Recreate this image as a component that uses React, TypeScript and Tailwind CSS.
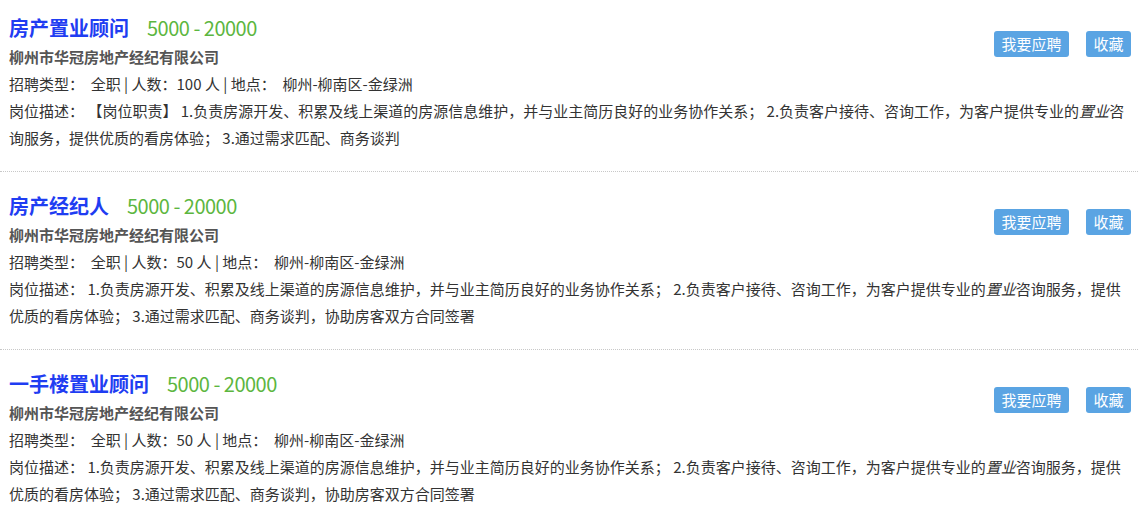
import React from "react";

type Job = {
  title: string;
  salary: string;
  company: string;
  type: string;
  count: number;
  place: string;
  prefix?: string;
  before: string;
  after: string;
};

const jobs: Job[] = [
  {
    title: "房产置业顾问",
    salary: "5000 - 20000",
    company: "柳州市华冠房地产经纪有限公司",
    type: "全职",
    count: 100,
    place: "柳州-柳南区-金绿洲",
    prefix: "【岗位职责】 ",
    before:
      "1.负责房源开发、积累及线上渠道的房源信息维护，并与业主简历良好的业务协作关系； 2.负责客户接待、咨询工作，为客户提供专业的",
    after: "咨询服务，提供优质的看房体验； 3.通过需求匹配、商务谈判",
  },
  {
    title: "房产经纪人",
    salary: "5000 - 20000",
    company: "柳州市华冠房地产经纪有限公司",
    type: "全职",
    count: 50,
    place: "柳州-柳南区-金绿洲",
    before:
      "1.负责房源开发、积累及线上渠道的房源信息维护，并与业主简历良好的业务协作关系； 2.负责客户接待、咨询工作，为客户提供专业的",
    after: "咨询服务，提供优质的看房体验； 3.通过需求匹配、商务谈判，协助房客双方合同签署",
  },
  {
    title: "一手楼置业顾问",
    salary: "5000 - 20000",
    company: "柳州市华冠房地产经纪有限公司",
    type: "全职",
    count: 50,
    place: "柳州-柳南区-金绿洲",
    before:
      "1.负责房源开发、积累及线上渠道的房源信息维护，并与业主简历良好的业务协作关系； 2.负责客户接待、咨询工作，为客户提供专业的",
    after: "咨询服务，提供优质的看房体验； 3.通过需求匹配、商务谈判，协助房客双方合同签署",
  },
];

const JobItem = ({ job }: { job: Job }) => {
  return (
    <div className="pl-[9px] pr-[7px] pt-[19px] first:pt-[13px] pb-[20px] border-b border-dotted border-[#c8c8c8]">
      <div className="flex items-start justify-between">
        <div>
          <div className="flex items-center h-[30px]">
            <span className="text-[20px] leading-[30px] font-bold text-[#1f3df2]">{job.title}</span>
            <span className="ml-[18px] text-[20px] leading-[30px] tracking-[-0.5px] text-[#5cb640]">
              {job.salary}
            </span>
          </div>
          <p className="text-[15px] leading-[27px] font-bold text-[#555]">{job.company}</p>
        </div>
        <div className="flex gap-[17px] mt-[18px]">
          <button className="w-[75px] h-[26px] rounded-[3px] bg-[#5aa4e3] text-white text-[15px] leading-[26px]">
            我要应聘
          </button>
          <button className="w-[45px] h-[26px] rounded-[3px] bg-[#5aa4e3] text-white text-[15px] leading-[26px]">
            收藏
          </button>
        </div>
      </div>
      <p className="text-[15px] leading-[27px] text-[#333]">
        招聘类型：&nbsp; {job.type} | 人数：{job.count} 人 | 地点：&nbsp; {job.place}
      </p>
      <p className="text-[15px] leading-[27px] text-[#333]">
        岗位描述：&nbsp;{job.prefix ?? ""}
        {job.before}
        <em>置业</em>
        {job.after}
      </p>
    </div>
  );
};

export default function App() {
  return (
    <div className="w-[1138px] bg-white font-['Noto_Sans_CJK_SC',sans-serif]">
      {jobs.map((job, i) => (
        <JobItem key={i} job={job} />
      ))}
    </div>
  );
}
